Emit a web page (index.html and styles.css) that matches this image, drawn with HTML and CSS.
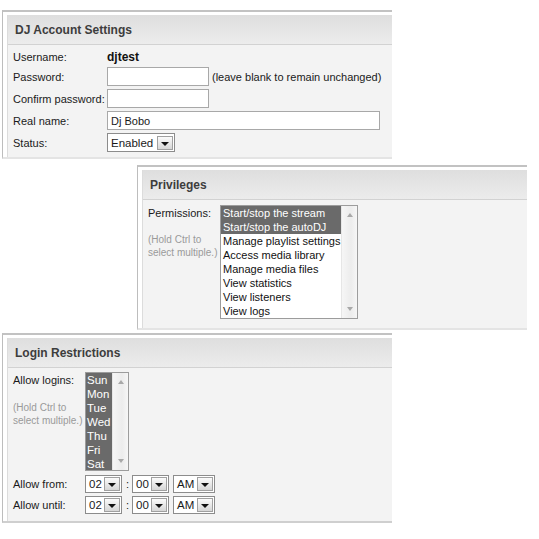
FILE: index.html
```html
<!DOCTYPE html>
<html>
<head>
<meta charset="utf-8">
<link rel="stylesheet" href="styles.css">
</head>
<body>
<div class="page">
  <section class="panel p1">
    <div class="inner">
      <div class="hd">DJ Account Settings</div>
      <div class="bd form f1">
        <div class="lbl">Username:</div>
        <div class="val"><b class="user">djtest</b></div>
        <div class="lbl">Password:</div>
        <div class="val"><span class="input w-short"></span><span class="note">(leave blank to remain unchanged)</span></div>
        <div class="lbl">Confirm password:</div>
        <div class="val"><span class="input w-short"></span></div>
        <div class="lbl">Real name:</div>
        <div class="val"><span class="input w-long">Dj Bobo</span></div>
        <div class="lbl">Status:</div>
        <div class="val"><span class="select s-status"><span class="stext">Enabled</span><span class="btn"><i class="arr"></i></span></span></div>
      </div>
    </div>
  </section>

  <section class="panel p2">
    <div class="inner">
      <div class="hd">Privileges</div>
      <div class="bd form f2">
        <div class="lbl">Permissions:<div class="hint">(Hold Ctrl to<br>select multiple.)</div></div>
        <div class="val">
          <div class="listbox lb-perm">
            <div class="items">
              <div class="it sel">Start/stop the stream</div>
              <div class="it sel">Start/stop the autoDJ</div>
              <div class="it">Manage playlist settings</div>
              <div class="it">Access media library</div>
              <div class="it">Manage media files</div>
              <div class="it">View statistics</div>
              <div class="it">View listeners</div>
              <div class="it">View logs</div>
            </div>
            <div class="sb"><i class="up"></i><i class="dn"></i></div>
          </div>
        </div>
      </div>
    </div>
  </section>

  <section class="panel p3">
    <div class="inner">
      <div class="hd">Login Restrictions</div>
      <div class="bd form f3">
        <div class="lbl">Allow logins:<div class="hint h3">(Hold Ctrl to<br>select multiple.)</div></div>
        <div class="val">
          <div class="listbox lb-days">
            <div class="items days">
              <div class="it sel">Sun</div>
              <div class="it sel">Mon</div>
              <div class="it sel">Tue</div>
              <div class="it sel">Wed</div>
              <div class="it sel">Thu</div>
              <div class="it sel">Fri</div>
              <div class="it sel">Sat</div>
            </div>
            <div class="sb"><i class="up"></i><i class="dn"></i></div>
          </div>
        </div>
        <div class="lbl">Allow from:</div>
        <div class="val time">
          <span class="select s-num"><span class="stext">02</span><span class="btn"><i class="arr"></i></span></span>
          <span class="colon">:</span>
          <span class="select s-num"><span class="stext">00</span><span class="btn"><i class="arr"></i></span></span>
          <span class="select s-ampm"><span class="stext">AM</span><span class="btn"><i class="arr"></i></span></span>
        </div>
        <div class="lbl">Allow until:</div>
        <div class="val time">
          <span class="select s-num"><span class="stext">02</span><span class="btn"><i class="arr"></i></span></span>
          <span class="colon">:</span>
          <span class="select s-num"><span class="stext">00</span><span class="btn"><i class="arr"></i></span></span>
          <span class="select s-ampm"><span class="stext">AM</span><span class="btn"><i class="arr"></i></span></span>
        </div>
      </div>
    </div>
  </section>
</div>
</body>
</html>
```

FILE: styles.css
```css
* { box-sizing: border-box; }
html, body { margin: 0; padding: 0; background: #fff; }
body {
  font-family: "Liberation Sans", Arial, sans-serif;
  font-size: 11px;
  color: #1a1a1a;
}
.page {
  display: flex;
  flex-direction: column;
  align-items: flex-start;
  padding-top: 10px;
}
.panel {
  width: 390px;
  border-top: 2px solid #c2c2c2;
  border-left: 1px solid #bdbdbd;
  border-bottom: 2px solid #e4e4e4;
  padding: 3px 0 0 4px;
  background: #fff;
}
.p1 { margin-left: 2px; }
.p2 { margin-left: 137px; margin-top: 6px; }
.p3 { margin-left: 2px; margin-top: 3px; border-bottom-color: #cfcfcf; }
.inner {
  border-left: 1px solid #dcdcdc;
  background: #f3f3f3;
}
.hd {
  height: 30px;
  background: linear-gradient(#dedede, #ececec);
  border-bottom: 1px solid #d2d2d2;
  font-size: 12px;
  font-weight: bold;
  color: #3d3d3d;
  padding: 8px 0 0 7px;
  line-height: 14px;
}
.form {
  display: grid;
  align-items: center;
  row-gap: 3px;
  padding: 5px 5px 5px 5px;
}
.f1 { grid-template-columns: 94px 1fr; padding-bottom: 5px; }
.f2 { grid-template-columns: 72px 1fr; padding-top: 5px; padding-bottom: 9px; }
.f3 { grid-template-columns: 72px 1fr; padding-top: 4px; padding-bottom: 7px; row-gap: 3px; }
.f2 .lbl, .f3 .lbl:first-child { align-self: start; padding-top: 1px; }
.f3 > .val:nth-child(2) { margin-bottom: 1px; }
.lbl { line-height: 14px; white-space: nowrap; }
.val { display: flex; align-items: center; line-height: 14px; }
.user { font-size: 12px; font-weight: bold; color: #111; }
.input {
  display: inline-block;
  height: 19px;
  border: 1px solid #a8a8a8;
  background: #fff;
  padding: 2px 3px;
  line-height: 14px;
}
.w-short { width: 102px; }
.w-long { width: 273px; }
.note { margin-left: 3px; }
.select {
  display: inline-flex;
  align-items: center;
  height: 18px;
  border: 1px solid #8c8c8c;
  background: #fff;
  padding: 0 1px 0 3px;
  justify-content: space-between;
}
.s-status { width: 68px; height: 19px; }
.s-num { width: 37px; }
.s-ampm { width: 42px; margin-left: 4px; }
.stext { line-height: 14px; font-size: 11.5px; }
.btn {
  width: 16px;
  height: 14px;
  border: 1px solid #a0a0a0;
  background: linear-gradient(#fbfbfb, #d6d6d6);
  display: flex;
  align-items: flex-end;
  justify-content: center;
  padding-bottom: 3px;
}
.arr {
  width: 0; height: 0;
  border-left: 4px solid transparent;
  border-right: 4px solid transparent;
  border-top: 4px solid #111;
}
.colon { margin: 0 4px 0 4px; width: 2px; }
.time { height: 18px; }
.hint {
  margin-top: 13px;
  font-size: 10px;
  line-height: 13px;
  color: #9a9a9a;
}
.h3 { margin-top: 14px; }
.listbox {
  display: flex;
  border: 1px solid #9c9c9c;
  background: #fff;
}
.lb-perm { width: 138px; height: 114px; }
.lb-days { width: 44px; height: 99px; }
.items { flex: 1; overflow: hidden; }
.it {
  height: 14px;
  line-height: 14px;
  padding-left: 2px;
  white-space: nowrap;
  color: #111;
}
.it.sel { background: #6a6a6a; color: #fff; }
.days .it { font-size: 11.5px; padding-left: 1px; }
.sb {
  width: 16px;
  background: linear-gradient(90deg, #f6f6f6, #ececec 60%, #f6f6f6);
  border-left: 1px solid #e6e6e6;
  display: flex;
  flex-direction: column;
  justify-content: space-between;
  align-items: center;
  padding: 7px 0 7px;
}
.up, .dn { width: 0; height: 0; border-left: 3px solid transparent; border-right: 3px solid transparent; }
.up { border-bottom: 4px solid #a8a8a8; }
.dn { border-top: 4px solid #a8a8a8; }
```
